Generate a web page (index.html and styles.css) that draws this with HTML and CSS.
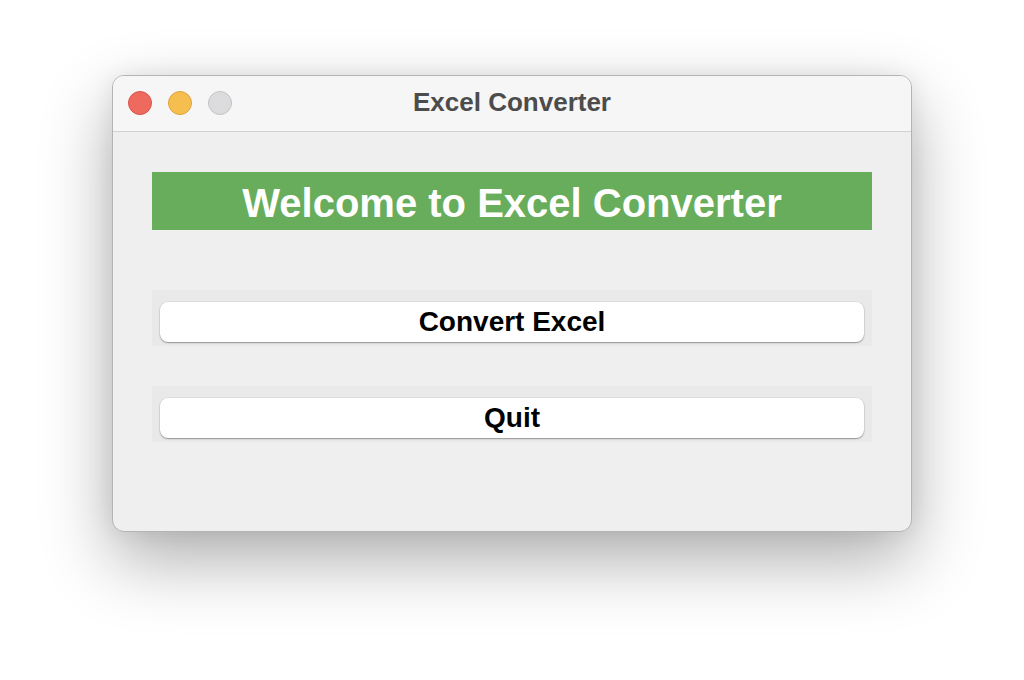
FILE: index.html
```html
<!DOCTYPE html>
<html>
<head>
<meta charset="utf-8">
<link rel="stylesheet" href="styles.css">
</head>
<body>
<div class="window">
  <div class="titlebar">
    <div class="lights">
      <span class="light red"></span>
      <span class="light yellow"></span>
      <span class="light gray"></span>
    </div>
    <div class="title">Excel Converter</div>
  </div>
  <div class="content">
    <div class="banner">Welcome to Excel Converter</div>
    <div class="frame"><button class="btn">Convert Excel</button></div>
    <div class="frame"><button class="btn">Quit</button></div>
  </div>
</div>
</body>
</html>
```

FILE: styles.css
```css
html, body {
  margin: 0;
  padding: 0;
  background: #ffffff;
}
body {
  min-height: 680px;
  box-sizing: border-box;
  padding: 75px 112px 0 112px;
  font-family: "Liberation Sans", Arial, sans-serif;
}
.window {
  width: 800px;
  height: 457px;
  box-sizing: border-box;
  border-radius: 12px;
  background: #efefef;
  border: 1px solid #b4b4b4;
  box-shadow: 0 28px 70px rgba(0,0,0,0.32), 0 0 22px rgba(0,0,0,0.07);
  overflow: hidden;
  display: flex;
  flex-direction: column;
}
.titlebar {
  height: 56px;
  box-sizing: border-box;
  background: #f6f6f7;
  border-bottom: 1px solid #d2d2d2;
  position: relative;
  display: flex;
  align-items: center;
  justify-content: center;
}
.lights {
  position: absolute;
  left: 15px;
  top: 15px;
  display: flex;
  gap: 16px;
}
.light {
  width: 24px;
  height: 24px;
  box-sizing: border-box;
  border-radius: 50%;
  display: block;
}
.red { background: #ee695e; border: 1px solid #d85249; }
.yellow { background: #f6be4f; border: 1px solid #dea43a; }
.gray { background: #dcdcde; border: 1px solid #c4c4c6; }
.title {
  font-weight: bold;
  font-size: 26px;
  color: #4c4c4c;
  margin-top: -2px;
}
.content {
  padding: 40px 39px 0 39px;
  display: flex;
  flex-direction: column;
}
.banner {
  height: 58px;
  background: #67ad5b;
  color: #ffffff;
  font-weight: bold;
  font-size: 40px;
  line-height: 1;
  padding-top: 4px;
  box-sizing: border-box;
  display: flex;
  align-items: center;
  justify-content: center;
  margin-bottom: 60px;
}
.frame {
  background: #e9e9e9;
  padding: 12px 8px 4px 8px;
  margin-bottom: 40px;
}
.btn {
  display: block;
  width: 100%;
  height: 40px;
  border: none;
  border-radius: 8px;
  background: #ffffff;
  box-shadow: 0 1px 1.5px rgba(0,0,0,0.35), 0 0 0 0.5px rgba(0,0,0,0.08);
  font-family: "Liberation Sans", Arial, sans-serif;
  font-weight: bold;
  font-size: 28px;
  color: #000000;
  padding: 0;
}
```
